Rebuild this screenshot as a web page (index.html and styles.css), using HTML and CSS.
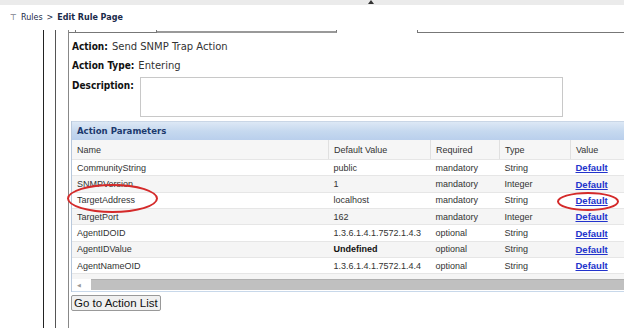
FILE: index.html
```html
<!DOCTYPE html>
<html>
<head>
  <title>Edit Rule Page</title>
  <link rel="stylesheet" href="styles.css">
</head>
<body>
  <div class="topbar"><span class="grip"></span></div>

  <div class="crumbs">
    <span class="crumb-icon">&#8868;</span>
    <span class="crumb-link">Rules</span>
    <span class="crumb-sep">&gt;</span>
    <span class="crumb-current">Edit Rule Page</span>
  </div>

  <div class="frame">
    <div class="rail">
      <div class="rail-inner">
        <div class="panel">
          <div class="tabs">
            <div class="tab tab-a"></div>
            <div class="tab tab-b"></div>
            <div class="tab tab-c"></div>
            <div class="tab-gap"></div>
            <div class="tab tab-d"></div>
          </div>

          <div class="field">
            <span class="label">Action:</span>
            <span class="value">Send SNMP Trap Action</span>
          </div>
          <div class="field">
            <span class="label">Action Type:</span>
            <span class="value">Entering</span>
          </div>
          <div class="field field-desc">
            <span class="label">Description:</span>
            <div class="desc-box"></div>
          </div>

          <div class="params">
            <div class="params-title">Action Parameters</div>
            <table class="params-table">
              <thead>
                <tr>
                  <th class="col-name">Name</th>
                  <th class="col-default">Default Value</th>
                  <th class="col-req">Required</th>
                  <th class="col-type">Type</th>
                  <th class="col-value">Value</th>
                </tr>
              </thead>
              <tbody>
                <tr>
                  <td>CommunityString</td><td>public</td><td>mandatory</td><td>String</td>
                  <td><a href="#">Default</a></td>
                </tr>
                <tr>
                  <td>SNMPVersion</td><td>1</td><td>mandatory</td><td>Integer</td>
                  <td><a href="#">Default</a></td>
                </tr>
                <tr>
                  <td>TargetAddress</td><td>localhost</td><td>mandatory</td><td>String</td>
                  <td><a href="#">Default</a></td>
                </tr>
                <tr>
                  <td>TargetPort</td><td>162</td><td>mandatory</td><td>Integer</td>
                  <td><a href="#">Default</a></td>
                </tr>
                <tr>
                  <td>AgentIDOID</td><td>1.3.6.1.4.1.7572.1.4.3</td><td>optional</td><td>String</td>
                  <td><a href="#">Default</a></td>
                </tr>
                <tr>
                  <td>AgentIDValue</td><td><b>Undefined</b></td><td>optional</td><td>String</td>
                  <td><a href="#">Default</a></td>
                </tr>
                <tr>
                  <td>AgentNameOID</td><td>1.3.6.1.4.1.7572.1.4.4</td><td>optional</td><td>String</td>
                  <td><a href="#">Default</a></td>
                </tr>
                <tr class="spacer"><td colspan="5"></td></tr>
              </tbody>
            </table>
            <div class="hscroll">
              <span class="hscroll-arrow">&#9664;</span>
              <div class="hscroll-thumb"></div>
            </div>
          </div>

          <button class="back-btn">Go to Action List</button>
        </div>
      </div>
    </div>

    <!-- red annotation marks -->
    <div class="mark mark-name"></div>
    <div class="mark mark-value"></div>
  </div>
</body>
</html>
```

FILE: styles.css
```css
body {
  margin: 0;
  width: 624px;
  height: 328px;
  overflow: hidden;
  background: #fff;
  font-family: "DejaVu Sans", Verdana, sans-serif;
  color: #222;
}

.topbar {
  height: 5px;
  background: #ebebeb;
  padding-left: 368px;
}

.grip {
  display: block;
  width: 0;
  height: 0;
  border-left: 3px solid transparent;
  border-right: 3px solid transparent;
  border-bottom: 4px solid #333;
}

.crumbs {
  display: flex;
  align-items: center;
  gap: 4px;
  height: 14px;
  padding: 5px 0 0 10px;
  font-size: 8px;
  color: #1a2a4a;
}

.crumb-icon {
  font-size: 8px;
  color: #445;
}

.crumb-current {
  font-weight: bold;
}

.frame {
  position: relative;
  padding: 6px 0 0 43px;
  height: 298px;
}

.rail {
  height: 100%;
  border-left: 1px solid #222;
  padding-left: 11px;
}

.rail-inner {
  height: 100%;
  border-left: 1px solid #555;
  padding-left: 12px;
}

.panel {
  height: 100%;
  width: 620px;
  border-left: 1px solid #888;
  padding-left: 2px;
  overflow: hidden;
}

.tabs {
  display: flex;
  height: 3px;
  margin-left: -3px;
  margin-bottom: 4px;
}

.tab {
  border-bottom: 1px solid #777;
  border-right: 1px solid #777;
}

.tab-a { width: 7px; }
.tab-b { width: 80px; }
.tab-c { width: 179px; border-bottom: 2px solid #999; }
.tab-gap { width: 80px; }
.tab-d { width: 240px; border-right: none; border-left: 1px solid #777; }

.field {
  display: flex;
  align-items: center;
  gap: 4px;
  height: 19px;
  padding-left: 1px;
  font-size: 10px;
}

.label {
  font-weight: bold;
  font-family: "DejaVu Sans Condensed", "DejaVu Sans", sans-serif;
  color: #111;
}

.value {
  color: #333;
}

.field-desc {
  align-items: flex-start;
  height: auto;
  padding-top: 2px;
}

.field-desc .label {
  padding-top: 3px;
}

.desc-box {
  width: 421px;
  height: 38px;
  border: 1px solid #c8c8c8;
  margin-left: 2px;
}

.params {
  margin-top: 4px;
  width: 620px;
  border-left: 1px solid #b8c8dc;
}

.params-title {
  height: 18px;
  line-height: 18px;
  padding-left: 5px;
  font-size: 9.5px;
  font-weight: bold;
  font-family: "DejaVu Sans Condensed", "DejaVu Sans", sans-serif;
  color: #1c3a6e;
  background: linear-gradient(#dde8f5, #c6d9ef 50%, #b9cfec);
  border-top: 1px solid #c9d6e6;
}

.params-table {
  border-collapse: collapse;
  width: 620px;
  font-family: "Liberation Sans", Arial, sans-serif;
  font-size: 9px;
  color: #333;
}

.params-table th,
.params-table td {
  text-align: left;
  font-weight: normal;
  padding: 0 0 0 5px;
  height: 15.35px;
  border-bottom: 1px solid #e6e6e6;
  white-space: nowrap;
}

.params-table th {
  height: 19px;
  background: #f6f6f6;
  border-left: 1px solid #e0e0e0;
}

.params-table th:first-child {
  border-left: none;
}

.params-table tbody tr:nth-child(even) td {
  background: #f5f5f5;
}

.params-table td b {
  color: #111;
}

.col-name { width: 251px; }
.col-default { width: 96px; }
.col-req { width: 63px; }
.col-type { width: 65px; }

.params-table a {
  color: #2233cc;
  font-weight: bold;
  font-size: 9.5px;
}

.params-table tr.spacer td {
  height: 5px;
  background: #fff;
  border-bottom: none;
}

.hscroll {
  display: flex;
  align-items: center;
  height: 11px;
  border-bottom: 1px solid #c8d8ea;
  padding-bottom: 1px;
}

.hscroll-arrow {
  width: 14px;
  font-size: 5px;
  color: #999;
  padding-left: 5px;
}

.hscroll-thumb {
  flex: 1;
  height: 10px;
  background: #c0c0c0;
  border-top: 1px solid #b0b0b0;
}

.back-btn {
  margin-top: 1px;
  font-family: "Liberation Sans", Arial, sans-serif;
  font-size: 11.5px;
  padding: 1px 2px;
  background: #f0f0f0;
  border: 1px solid #999;
  border-radius: 2px;
  color: #111;
}

.mark {
  position: absolute;
  border: 2px solid #d42a2a;
  border-radius: 50%;
}

.mark-name {
  left: 67px;
  top: 160px;
  width: 87px;
  height: 25px;
}

.mark-value {
  left: 557px;
  top: 168px;
  width: 58px;
  height: 15px;
}
```
